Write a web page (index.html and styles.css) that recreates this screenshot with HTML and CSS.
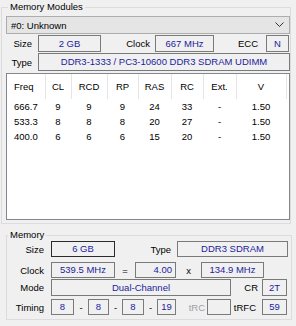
FILE: index.html
```html
<!DOCTYPE html>
<html lang="en">
<head>
    <meta charset="UTF-8">
    <title>SPD</title>
    <link rel="stylesheet" href="styles.css">
</head>
<body>
    <fieldset class="group modules">
        <legend>Memory Modules</legend>
        <div class="combo">
            <span>#0: Unknown</span>
            <svg width="9" height="6" viewBox="0 0 9 6"><path d="M0.5 0.5 L4.5 4.5 L8.5 0.5" fill="none" stroke="#333" stroke-width="1"/></svg>
        </div>
        <div class="row r1">
            <span class="lbl w-size">Size</span>
            <span class="val w63">2 GB</span>
            <span class="lbl w-clock">Clock</span>
            <span class="val w59">667 MHz</span>
            <span class="lbl w-ecc">ECC</span>
            <span class="val w23">N</span>
        </div>
        <div class="row r2">
            <span class="lbl w-size">Type</span>
            <span class="val grow">DDR3-1333 / PC3-10600 DDR3 SDRAM UDIMM</span>
        </div>
        <div class="timings">
            <table>
                <colgroup>
                    <col style="width:38px"><col style="width:26px"><col style="width:36px"><col style="width:31px">
                    <col style="width:33px"><col style="width:32px"><col style="width:33px"><col style="width:50px"><col>
                </colgroup>
                <thead>
                    <tr><th class="first">Freq</th><th>CL</th><th>RCD</th><th>RP</th><th>RAS</th><th>RC</th><th>Ext.</th><th>V</th><th></th></tr>
                </thead>
                <tbody>
                    <tr><td class="first">666.7</td><td>9</td><td>9</td><td>9</td><td>24</td><td>33</td><td>-</td><td>1.50</td><td></td></tr>
                    <tr><td class="first">533.3</td><td>8</td><td>8</td><td>8</td><td>20</td><td>27</td><td>-</td><td>1.50</td><td></td></tr>
                    <tr><td class="first">400.0</td><td>6</td><td>6</td><td>6</td><td>15</td><td>20</td><td>-</td><td>1.50</td><td></td></tr>
                </tbody>
            </table>
        </div>
    </fieldset>

    <fieldset class="group memory">
        <legend>Memory</legend>
        <div class="row m1">
            <span class="lbl w-left">Size</span>
            <span class="val w64 dark">6 GB</span>
            <span class="lbl w-type">Type</span>
            <span class="val w111">DDR3 SDRAM</span>
        </div>
        <div class="row m2">
            <span class="lbl w-left">Clock</span>
            <span class="val w64">539.5 MHz</span>
            <span class="op w20">=</span>
            <span class="val w41 right">4.00</span>
            <span class="op w25">x</span>
            <span class="val w63">134.9 MHz</span>
        </div>
        <div class="row m3">
            <span class="lbl w-left">Mode</span>
            <span class="val w180">Dual-Channel</span>
            <span class="lbl w-cr">CR</span>
            <span class="val w25">2T</span>
        </div>
        <div class="row m4">
            <span class="lbl w-left">Timing</span>
            <span class="val w23">8</span>
            <span class="op w14">-</span>
            <span class="val w21">8</span>
            <span class="op w13">-</span>
            <span class="val w22">8</span>
            <span class="op w13">-</span>
            <span class="val w19">19</span>
            <span class="lbl w-trc disabled">tRC</span>
            <span class="val w24"></span>
            <span class="lbl w-trfc">tRFC</span>
            <span class="val w25">59</span>
        </div>
    </fieldset>
</body>
</html>
```

FILE: styles.css
```css
body {
    margin: 0;
    width: 296px;
    height: 326px;
    overflow: hidden;
    background: #f0f0f0;
    font-family: "Liberation Sans", Arial, sans-serif;
    font-size: 9.5px;
    color: #000;
}
.group {
    border: 1px solid #dcdcdc;
    min-width: 0;
}
.group legend {
    padding: 0 2px;
    line-height: 12px;
}
.modules {
    margin: 1px 5px 0 1px;
    padding: 3px 0 3px 4px;
}
.modules legend {
    margin-left: 2px;
}
.memory {
    margin: 5px 4px 0 6px;
    padding: 0 0 4px 0;
}
.memory legend {
    margin-left: 1px;
}
.combo {
    display: flex;
    align-items: center;
    justify-content: space-between;
    height: 18px;
    box-sizing: border-box;
    border: 1px solid #adadad;
    background: #e5e5e5;
    padding: 0 5px 0 4px;
}
.row {
    display: flex;
    align-items: center;
}
.lbl {
    text-align: right;
    box-sizing: border-box;
    flex: none;
}
.val {
    flex: none;
    box-sizing: border-box;
    border: 1px solid #7a7a7a;
    color: #1c1c9c;
    text-align: center;
    height: 16px;
    line-height: 14px;
    white-space: nowrap;
    overflow: hidden;
}
.val.dark { border-color: #2b2b2b; }
.val.right { text-align: right; padding-right: 3px; }
.op { flex: none; text-align: center; }
.disabled { color: #a0a0a0; }
.grow { flex: 1; }

/* module rows */
.r1 { margin-top: 1px; }
.r1 .val { height: 17px; line-height: 15px; }
.r2 { margin-top: 1px; }
.r2 .val { height: 18px; line-height: 16px; }
.w-size { width: 32px; padding-right: 6px; }
.w-clock { width: 54px; padding-right: 5px; }
.w-ecc { width: 52px; padding-right: 8px; }

.timings {
    margin-top: 2px;
    height: 147px;
    box-sizing: border-box;
    border: 1px solid #828790;
    background: #fff;
}
.timings table {
    width: 100%;
    border-collapse: collapse;
    table-layout: fixed;
}
.timings th {
    font-weight: normal;
    height: 25px;
    padding: 0;
    border-right: 1px solid #e5e5e5;
    text-align: center;
}
.timings td {
    height: 15px;
    padding: 0;
    text-align: center;
}
.timings .first { text-align: left; padding-left: 7px; }
.timings th:last-child { border-right: none; }

/* memory rows */
.m2 { margin-top: 5px; }
.m3 { margin-top: 1px; }
.m3 .val { height: 17px; line-height: 15px; }
.m4 { margin-top: 3px; }
.w-left { width: 44px; padding-right: 7px; }
.w-type { width: 62px; padding-right: 6px; }
.w-cr { width: 31px; padding-right: 4px; }
.w-trc { width: 31px; padding-right: 2px; }
.w-trfc { width: 31px; padding-right: 6px; }

.w13 { width: 13px; }
.w14 { width: 14px; }
.w19 { width: 19px; }
.w20 { width: 20px; }
.w21 { width: 21px; }
.w22 { width: 22px; }
.w23 { width: 23px; }
.w24 { width: 24px; }
.w25 { width: 25px; }
.w41 { width: 41px; }
.w59 { width: 59px; }
.w63 { width: 63px; }
.w64 { width: 64px; }
.w111 { width: 111px; }
.w180 { width: 180px; }
```
